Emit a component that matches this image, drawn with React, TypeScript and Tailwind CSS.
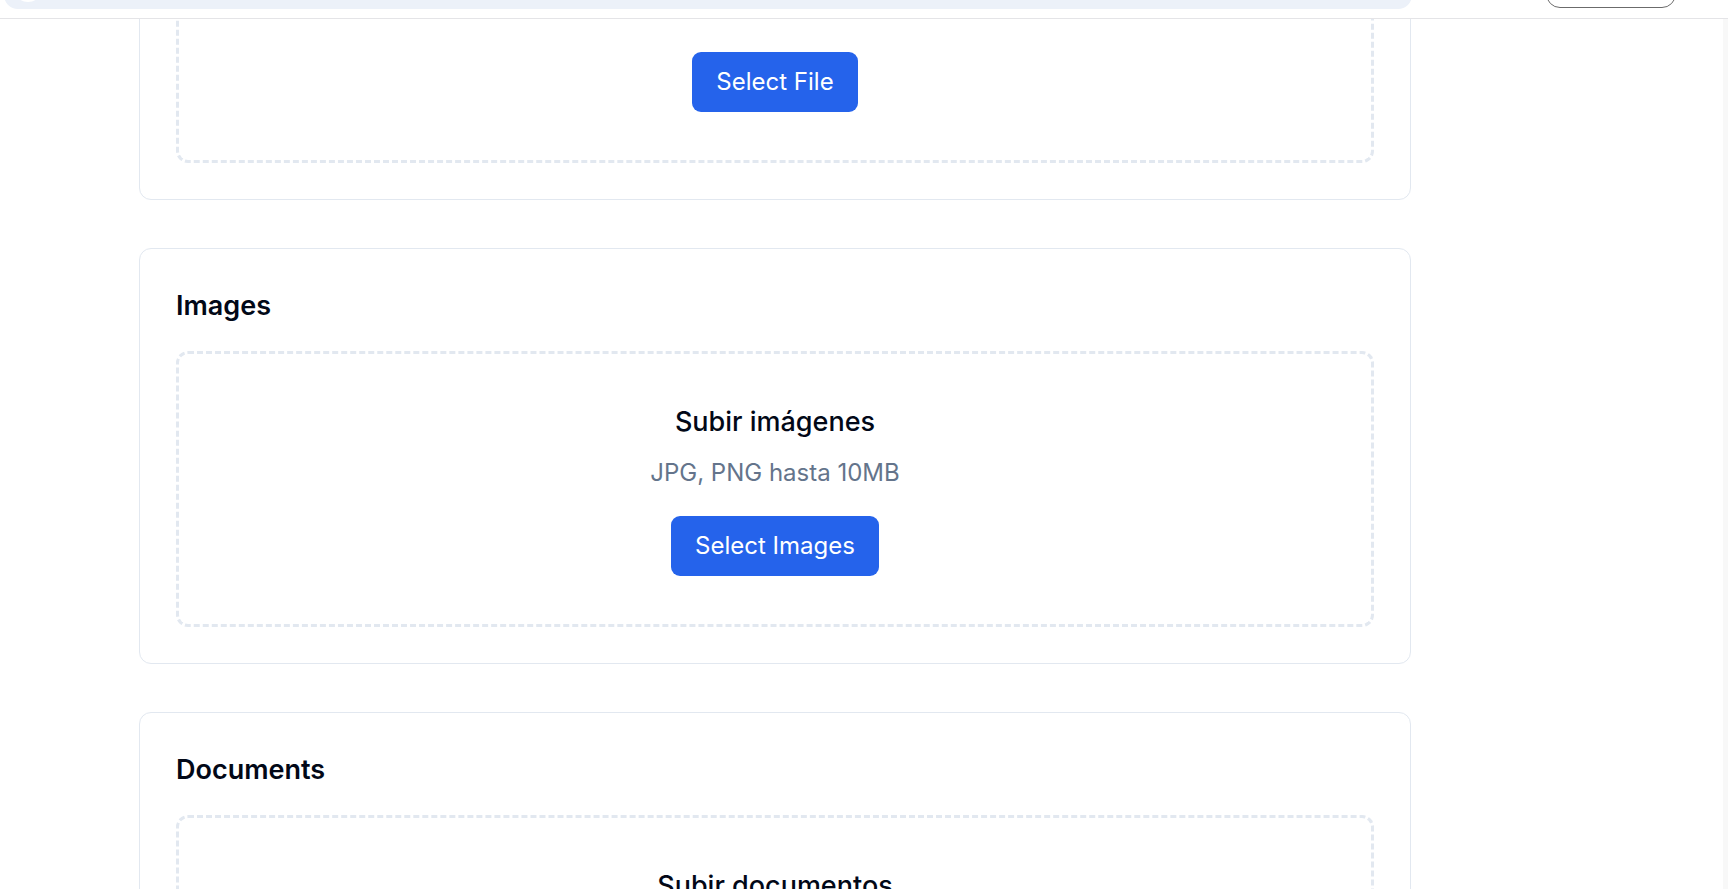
type Upload = {
  heading: string;
  title: string;
  hint: string;
  action: string;
};

const uploads: Upload[] = [
  {
    heading: "Main File",
    title: "Subir archivo",
    hint: "PDF hasta 50MB",
    action: "Select File",
  },
  {
    heading: "Images",
    title: "Subir imágenes",
    hint: "JPG, PNG hasta 10MB",
    action: "Select Images",
  },
  {
    heading: "Documents",
    title: "Subir documentos",
    hint: "PDF, DOC, DOCX hasta 10MB",
    action: "Select Documents",
  },
];

function UploadCard({ item }: { item: Upload }) {
  return (
    <section className="rounded-[12px] border border-[#e2e8f0] bg-white p-[36px]">
      <h2 className="mb-[24px] text-[27px] leading-[42px] font-semibold text-[#020817]">
        {item.heading}
      </h2>
      <div className="flex flex-col items-center rounded-[12px] border-[3px] border-dashed border-[#e2e8f0] pt-[47px] pb-[48px]">
        <h3 className="mb-[12px] text-[27px] leading-[42px] font-medium text-[#020817]">
          {item.title}
        </h3>
        <p className="mb-[25px] text-[24px] leading-[36px] text-[#64748b]">
          {item.hint}
        </p>
        <button className="h-[60px] rounded-[9px] bg-[#2563eb] px-[24px] text-[24px] leading-[36px] text-white">
          {item.action}
        </button>
      </div>
    </section>
  );
}

export default function App() {
  return (
    <div className="flex h-screen flex-col overflow-hidden bg-white font-['Inter',sans-serif]">
      <header className="flex h-[19px] shrink-0 items-end overflow-hidden border-b border-[#e4e4e7] bg-white pl-[4px]">
        <div className="relative mb-[9px] h-[44px] w-[1408px] shrink-0 rounded-[14px] bg-[#ecf1f9]">
          <span className="absolute bottom-[7px] left-[9px] h-[30px] w-[30px] rounded-full bg-white" />
        </div>
        <button className="mb-[10px] ml-[134px] h-[40px] w-[130px] shrink-0 rounded-[14px] border border-[#6b6b6b] bg-white" />
      </header>
      <main className="flex min-h-0 flex-1 overflow-hidden">
        <div className="flex-1 pl-[139px]">
          <div className="-mt-[235px] flex w-[1272px] flex-col gap-[48px] pb-16">
            {uploads.map((u) => (
              <UploadCard key={u.heading} item={u} />
            ))}
          </div>
        </div>
        <div className="w-[5px] shrink-0 bg-[#f8f8f8]" />
      </main>
    </div>
  );
}
